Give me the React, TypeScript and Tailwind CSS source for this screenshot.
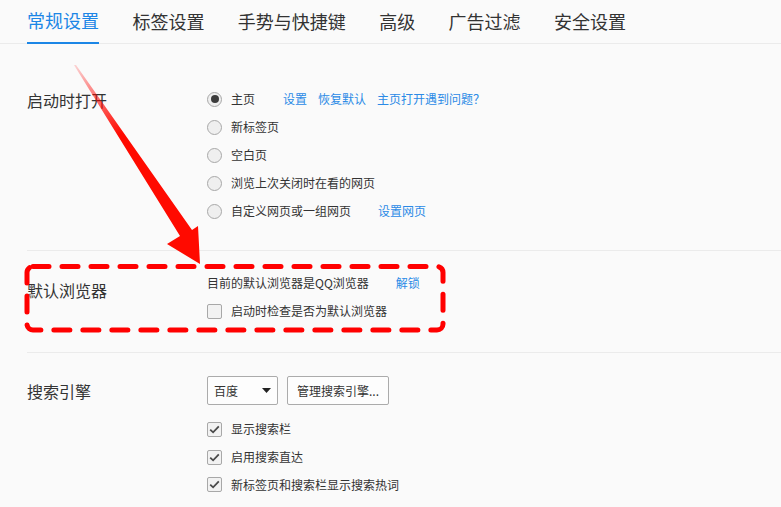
import React from "react";

const FONT = { fontFamily: '"Noto Sans CJK SC", "Noto Sans", sans-serif' };

function Radio({ checked }: { checked?: boolean }) {
  return (
    <span className="flex h-[15px] w-[15px] shrink-0 items-center justify-center rounded-full border border-[#a8a8a8] bg-[#efefef]">
      {checked && <span className="h-[8px] w-[8px] rounded-full bg-[#3c3c3c]" />}
    </span>
  );
}

function Check({ checked }: { checked?: boolean }) {
  return (
    <span className="flex h-[15px] w-[15px] shrink-0 items-center justify-center rounded-[2px] border border-[#a8a8a8] bg-[#f2f2f2]">
      {checked && (
        <svg width="11" height="9" viewBox="0 0 11 9">
          <path d="M1.2 4.6 L4.1 7.3 L9.8 1.4" fill="none" stroke="#4a4a4a" strokeWidth="1.8" />
        </svg>
      )}
    </span>
  );
}

const Link = ({ children, className = "" }: { children: React.ReactNode; className?: string }) => (
  <span className={`text-[#2b8ae6] ${className}`}>{children}</span>
);

export default function App() {
  const tabs = ["常规设置", "标签设置", "手势与快捷键", "高级", "广告过滤", "安全设置"];
  return (
    <div className="relative h-[507px] w-[781px] overflow-hidden bg-[#fafafa] text-[#333]" style={FONT}>
      {/* Tabs */}
      <div className="flex h-[44px] gap-[33.4px] border-b border-[#ebebeb] pl-[27px]">
        {tabs.map((t, i) => (
          <div
            key={t}
            className={`flex h-[44px] items-center pb-[3px] text-[18px] leading-[24px] ${
              i === 0 ? "-mb-px border-b-2 border-[#1c86e6] text-[#1c86e6]" : "text-[#333]"
            }`}
          >
            {t}
          </div>
        ))}
      </div>

      {/* Section 1 */}
      <div className="flex pl-[27px]">
        <div className="w-[180px] pt-[44px] text-[16px] leading-[24px]">启动时打开</div>
        <div className="flex flex-col pt-[41px] pb-[25px] text-[12px] text-[#333]">
          {[
            <>
              <span>主页</span>
              <Link className="ml-[28px]">设置</Link>
              <Link className="ml-[11px]">恢复默认</Link>
              <Link className="ml-[11px]">主页打开遇到问题？</Link>
            </>,
            <span>新标签页</span>,
            <span>空白页</span>,
            <span>浏览上次关闭时在看的网页</span>,
            <>
              <span>自定义网页或一组网页</span>
              <Link className="ml-[27px]">设置网页</Link>
            </>,
          ].map((c, i) => (
            <div key={i} className="flex h-[28px] items-center leading-[16px]">
              <Radio checked={i === 0} />
              <span className="ml-[9px] flex items-center">{c}</span>
            </div>
          ))}
        </div>
      </div>

      {/* Section 2 */}
      <div className="ml-[27px] flex border-t border-[#ebebeb]">
        <div className="w-[180px] pt-[27px] text-[16px] leading-[24px]">默认浏览器</div>
        <div className="flex flex-col pt-[18px] pb-[27px] text-[12px]">
          <div className="flex h-[28px] items-center leading-[16px]">
            <span>目前的默认浏览器是QQ浏览器</span>
            <Link className="ml-[27px]">解锁</Link>
          </div>
          <div className="flex h-[28px] items-center leading-[16px]">
            <Check />
            <span className="ml-[9px]">启动时检查是否为默认浏览器</span>
          </div>
        </div>
      </div>

      {/* Section 3 */}
      <div className="ml-[27px] flex border-t border-[#ebebeb]">
        <div className="w-[180px] pt-[26px] text-[16px] leading-[24px]">搜索引擎</div>
        <div className="flex flex-col pt-[23px] text-[12px]">
          <div className="flex items-center gap-[9px]">
            <div className="flex h-[29px] w-[71px] items-center justify-between rounded-[2px] border border-[#ababab] bg-[#fdfdfd] pl-[6px] pr-[6px] leading-[16px]">
              <span>百度</span>
              <svg width="9" height="5" viewBox="0 0 9 5">
                <path d="M0 0 H9 L4.5 5 Z" fill="#222" />
              </svg>
            </div>
            <div className="flex h-[29px] w-[102px] items-center justify-center rounded-[2px] border border-[#ababab] bg-[#fdfdfd] leading-[16px]">
              管理搜索引擎...
            </div>
          </div>
          <div className="mt-[10px] flex flex-col">
            {["显示搜索栏", "启用搜索直达", "新标签页和搜索栏显示搜索热词"].map((t, i) => (
              <div key={t} className={`flex ${i === 2 ? "h-[27px]" : "h-[28px]"} items-center leading-[16px]`}>
                <Check checked />
                <span className="ml-[9px]">{t}</span>
              </div>
            ))}
          </div>
        </div>
      </div>

      {/* Annotation overlay */}
      <svg className="pointer-events-none absolute left-0 top-0" width="781" height="507" viewBox="0 0 781 507">
        <defs>
          <linearGradient id="fade" x1="74" y1="65" x2="120" y2="135" gradientUnits="userSpaceOnUse">
            <stop offset="0" stopColor="#ff0000" stopOpacity="0.15" />
            <stop offset="1" stopColor="#ff0a00" stopOpacity="1" />
          </linearGradient>
        </defs>
        <polygon points="74,65 76,65 192,230 198,226 200,264 167,244 180,236" fill="url(#fade)" />
        <rect
          x="27"
          y="266.5"
          width="416"
          height="63.5"
          rx="6"
          fill="none"
          stroke="#ff0000"
          strokeWidth="5"
          strokeDasharray="16 13"
          strokeLinecap="round"
        />
      </svg>
    </div>
  );
}
